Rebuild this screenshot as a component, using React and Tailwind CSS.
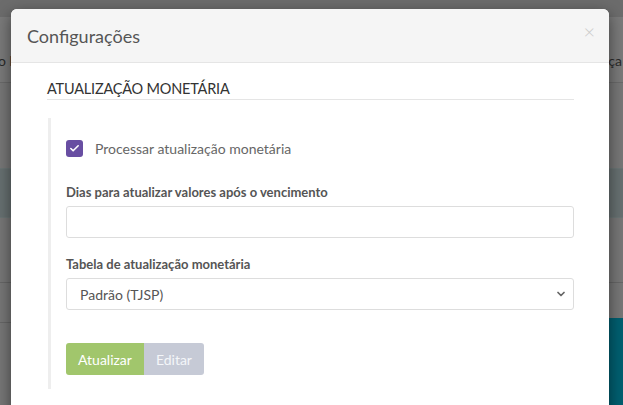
import { Check, ChevronDown } from 'lucide-react'

const font = { fontFamily: 'Lato, "Open Sans", sans-serif' }

// page bands that sit behind the dimmed overlay
const Backdrop = () => (
  <div className="flex flex-col h-[405px] bg-[#777777]">
    <div className="h-[17px] bg-[#6c6c6c]" />
    <div className="h-[66px] bg-[#7a7a7a] border-b border-[#6a6a6a] flex items-end justify-between pb-[12px] text-[14px] leading-[18px] text-[#2a2a2a]">
      <span className="-ml-[2px]">o b</span>
      <span className="mr-[1px]">ça</span>
    </div>
    <div className="h-[85px]" />
    <div className="h-[50px] bg-[#677071] border-y border-[#6b7575]" />
    <div className="h-[65px] border-b border-[#666666]" />
    <div className="h-[40px] border-b border-[#666666]" />
    <div className="flex-1 flex justify-end">
      <div className="w-[14px] mt-[-5px] bg-[#005f70]" />
    </div>
  </div>
)

const Field = ({ label, children }) => (
  <div className="mb-[17px]">
    <label className="block text-[13px] leading-[18px] font-bold text-[#555] mb-[5px]">{label}</label>
    {children}
  </div>
)

export default function App() {
  return (
    <div className="relative w-[623px] h-[405px] overflow-hidden" style={font}>
      <Backdrop />
      <div className="absolute left-[11px] top-[9px] w-[598px] h-[420px] bg-white rounded-[6px] shadow-[0_5px_15px_rgba(0,0,0,0.5)] overflow-hidden">
        <div className="h-[54px] bg-[#f5f5f5] border-b border-[#e5e5e5] flex items-center justify-between pl-[16px] pr-[14px]">
          <h4 className="text-[18px] text-[#555] mt-[1px]">Configurações</h4>
          <span className="text-[20px] leading-none font-light text-[#cccccc] -mt-[9px]">×</span>
        </div>
        <div className="pl-[36px] pr-[35px] pt-[16px]">
          <h5 className="text-[14.5px] leading-[20px] text-[#333] border-b border-[#e5e5e5] tracking-[-0.2px]">
            ATUALIZAÇÃO MONETÁRIA
          </h5>
          <div className="mt-[18px] ml-[1px] border-l-[3px] border-[#eeeeee] pl-[15px] pt-[20px] pb-[14px]">
            <label className="flex items-center gap-[12px] mb-[24px]">
              <span className="w-[17px] h-[17px] rounded-[3px] bg-[#684ea2] flex items-center justify-center">
                <Check className="w-[11px] h-[11px] text-white" strokeWidth={3.5} />
              </span>
              <span className="text-[14px] text-[#666]">Processar atualização monetária</span>
            </label>
            <Field label="Dias para atualizar valores após o vencimento">
              <div className="h-[32px] border border-[#dddddd] rounded-[3px]" />
            </Field>
            <Field label="Tabela de atualização monetária">
              <div className="h-[32px] border border-[#dddddd] rounded-[3px] flex items-center justify-between pl-[13px] pr-[6px]">
                <span className="text-[14px] text-[#555]">Padrão (TJSP)</span>
                <ChevronDown className="w-[12px] h-[12px] text-[#666]" strokeWidth={3.5} />
              </div>
            </Field>
            <div className="flex mt-[33px]">
              <button className="h-[32px] px-[12px] bg-[#a1c66c] text-white text-[14px] rounded-l-[3px]">Atualizar</button>
              <button className="h-[32px] px-[12px] bg-[#c6cad6] text-[#f4f6f9] text-[14px] rounded-r-[3px]">Editar</button>
            </div>
          </div>
        </div>
      </div>
    </div>
  )
}
